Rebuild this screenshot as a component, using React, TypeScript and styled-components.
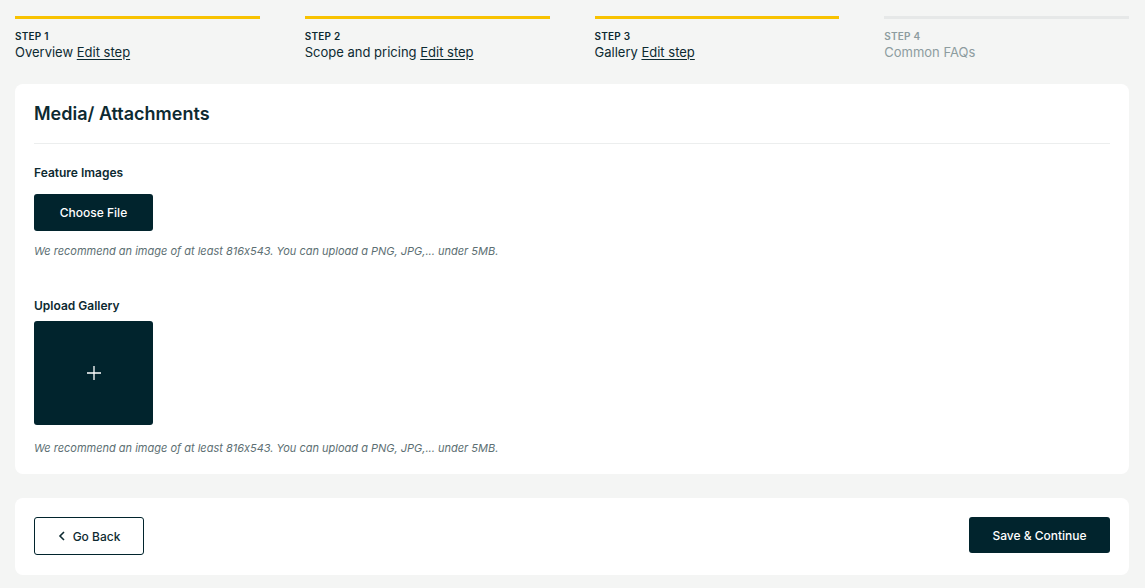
import React from 'react';
import styled, { createGlobalStyle } from 'styled-components';

const GlobalStyle = createGlobalStyle`
    body {
        margin: 0;
        background: #f4f5f4;
        font-family: Inter, "Noto Sans", sans-serif;
        color: #0d2a31;
    }
`;

const Page = styled.div`
    padding: 16px 16px 13px 15px;
    display: flex;
    flex-direction: column;
`;

const Steps = styled.div`
    display: grid;
    grid-template-columns: repeat(4, 1fr);
    gap: 45px;
    margin-bottom: 23px;
`;

const Step = styled.div<{ $done: boolean }>`
    border-top: 3px solid ${(p) => (p.$done ? '#f8c200' : '#e6e8e8')};
    padding-top: 10px;
    color: ${(p) => (p.$done ? '#0d2a31' : '#8d9c9f')};
`;

const StepNum = styled.div`
    font-size: 10px;
    font-weight: 600;
    letter-spacing: 0.2px;
    line-height: 14px;
`;

const StepName = styled.div`
    font-size: 13px;
    line-height: 18px;

    a {
        color: inherit;
        text-decoration: underline;
        text-underline-offset: 2px;
    }
`;

const Card = styled.section`
    background: #fff;
    border-radius: 8px;
    padding: 0 19px;
`;

const MainCard = styled(Card)`
    padding-bottom: 18px;
    margin-bottom: 24px;
`;

const Title = styled.h2`
    margin: 0;
    font-size: 18px;
    font-weight: 600;
    line-height: 24px;
    padding: 18px 0 17px;
    border-bottom: 1px solid #eceeee;
`;

const Field = styled.div<{ $gap: number }>`
    padding-top: ${(p) => p.$gap}px;
`;

const Label = styled.div`
    font-size: 12px;
    font-weight: 600;
    line-height: 16px;
    margin-bottom: 13px;
`;

const DarkButton = styled.button`
    background: #01242d;
    color: #fff;
    border: none;
    border-radius: 3px;
    font-family: inherit;
    font-size: 12px;
    font-weight: 500;
    cursor: pointer;
`;

const ChooseButton = styled(DarkButton)`
    width: 119px;
    height: 37px;
    display: block;
`;

const AddTile = styled(DarkButton)`
    width: 119px;
    height: 104px;
    display: flex;
    align-items: center;
    justify-content: center;
    margin-top: -6px;
`;

const Hint = styled.p<{ $top: number }>`
    margin: ${(p) => p.$top}px 0 0;
    font-size: 11px;
    font-style: italic;
    font-feature-settings: "calt" 0;
    color: #5d6f73;
    line-height: 15px;
`;

const Footer = styled(Card)`
    display: flex;
    justify-content: space-between;
    align-items: flex-start;
    height: 77px;
    padding-top: 19px;
    box-sizing: border-box;
`;

const BackButton = styled.button`
    width: 110px;
    height: 38px;
    background: #fff;
    border: 1px solid #01242d;
    border-radius: 3px;
    color: #0d2a31;
    font-family: inherit;
    font-size: 12px;
    font-weight: 500;
    display: flex;
    align-items: center;
    justify-content: center;
    gap: 7px;
`;

const SaveButton = styled(DarkButton)`
    width: 141px;
    height: 36px;
`;

const steps = [
    { num: 'STEP 1', name: 'Overview', done: true },
    { num: 'STEP 2', name: 'Scope and pricing', done: true },
    { num: 'STEP 3', name: 'Gallery', done: true },
    { num: 'STEP 4', name: 'Common FAQs', done: false },
];

const hint = 'We recommend an image of at least 816x543. You can upload a PNG, JPG,... under 5MB.';

const App: React.FC = () => {
    return (
        <Page>
            <GlobalStyle />
            <Steps>
                {steps.map((s) => (
                    <Step key={s.num} $done={s.done}>
                        <StepNum>{s.num}</StepNum>
                        <StepName>
                            {s.name}
                            {s.done && <> <a href="#">Edit step</a></>}
                        </StepName>
                    </Step>
                ))}
            </Steps>
            <MainCard>
                <Title>Media/ Attachments</Title>
                <Field $gap={21}>
                    <Label>Feature Images</Label>
                    <ChooseButton>Choose File</ChooseButton>
                    <Hint $top={13}>{hint}</Hint>
                </Field>
                <Field $gap={39}>
                    <Label>Upload Gallery</Label>
                    <AddTile aria-label="Add image">
                        <svg width="16" height="16" viewBox="0 0 16 16" fill="none" stroke="#fff" strokeWidth="1.3">
                            <path d="M8 1v14M1 8h14" />
                        </svg>
                    </AddTile>
                    <Hint $top={16}>{hint}</Hint>
                </Field>
            </MainCard>
            <Footer>
                <BackButton>
                    <svg width="8" height="10" viewBox="0 0 8 10" fill="none" stroke="#0d2a31" strokeWidth="1.6">
                        <path d="M6 1L2 5l4 4" />
                    </svg>
                    Go Back
                </BackButton>
                <SaveButton>Save &amp; Continue</SaveButton>
            </Footer>
        </Page>
    );
};

export default App;
